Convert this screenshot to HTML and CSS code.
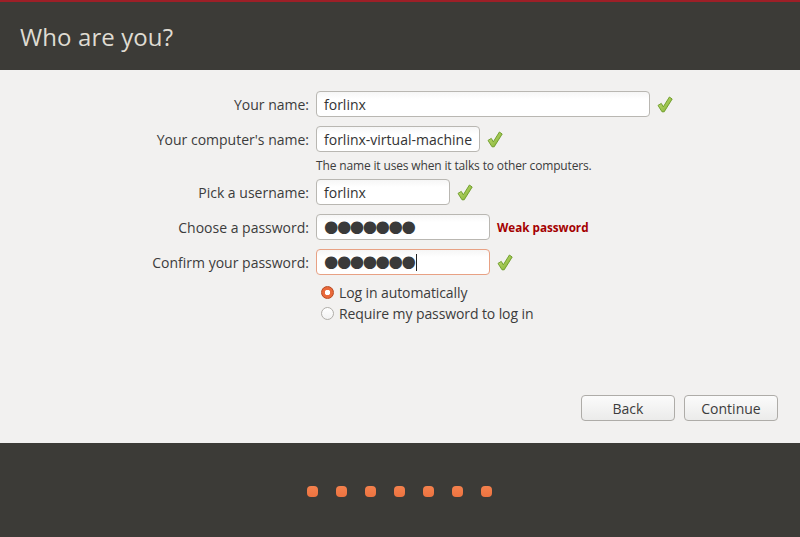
FILE: index.html
```html
<!DOCTYPE html>
<html>
<head>
<meta charset="utf-8">
<link rel="stylesheet" href="styles.css">
</head>
<body>
<div class="window">
  <header class="header">
    <h1 class="title">Who are you?</h1>
  </header>
  <main class="content">
    <div class="form">
      <label class="label">Your name:</label>
      <div class="field">
        <div class="input w1">forlinx</div>
        <svg class="check" viewBox="0 0 16 17" width="16" height="17"><defs><linearGradient id="g" x1="0" y1="0" x2="1" y2="1"><stop offset="0" stop-color="#c6e17a"/><stop offset="1" stop-color="#7fae2e"/></linearGradient></defs><path d="M1 9.4 L4.3 7.4 L6.3 10.8 L12.4 1 L15.2 3 L7.2 15.8 L5 15.8 Z" fill="url(#g)" stroke="#6a9a25" stroke-width="0.9" stroke-linejoin="round"/></svg>
      </div>

      <label class="label">Your computer's name:</label>
      <div class="field">
        <div class="input w2">forlinx-virtual-machine</div>
        <svg class="check" viewBox="0 0 16 17" width="16" height="17"><path d="M1 9.4 L4.3 7.4 L6.3 10.8 L12.4 1 L15.2 3 L7.2 15.8 L5 15.8 Z" fill="url(#g)" stroke="#6a9a25" stroke-width="0.9" stroke-linejoin="round"/></svg>
      </div>
      <div></div>
      <div class="hint">The name it uses when it talks to other computers.</div>

      <label class="label">Pick a username:</label>
      <div class="field">
        <div class="input w3">forlinx</div>
        <svg class="check" viewBox="0 0 16 17" width="16" height="17"><path d="M1 9.4 L4.3 7.4 L6.3 10.8 L12.4 1 L15.2 3 L7.2 15.8 L5 15.8 Z" fill="url(#g)" stroke="#6a9a25" stroke-width="0.9" stroke-linejoin="round"/></svg>
      </div>

      <label class="label">Choose a password:</label>
      <div class="field">
        <div class="input w4"><span class="dots">●●●●●●●</span></div>
        <span class="weak">Weak password</span>
      </div>

      <label class="label">Confirm your password:</label>
      <div class="field">
        <div class="input w4 focus"><span class="dots">●●●●●●●</span><span class="caret"></span></div>
        <svg class="check" viewBox="0 0 16 17" width="16" height="17"><path d="M1 9.4 L4.3 7.4 L6.3 10.8 L12.4 1 L15.2 3 L7.2 15.8 L5 15.8 Z" fill="url(#g)" stroke="#6a9a25" stroke-width="0.9" stroke-linejoin="round"/></svg>
      </div>

      <div></div>
      <div class="radios">
        <div class="radio-row"><span class="radio on"></span><span>Log in automatically</span></div>
        <div class="radio-row"><span class="radio"></span><span>Require my password to log in</span></div>
      </div>
    </div>
    <div class="buttons">
      <button class="btn">Back</button>
      <button class="btn">Continue</button>
    </div>
  </main>
  <footer class="footer">
    <span class="dot"></span><span class="dot"></span><span class="dot"></span><span class="dot"></span><span class="dot"></span><span class="dot"></span><span class="dot"></span>
  </footer>
</div>
</body>
</html>
```

FILE: styles.css
```css
* { box-sizing: border-box; }
html, body { margin: 0; padding: 0; }
body {
  width: 800px;
  height: 537px;
  overflow: hidden;
  font-family: "Open Sans", "DejaVu Sans", sans-serif;
  color: #3c3c3c;
  font-size: 14px;
}
.window {
  display: flex;
  flex-direction: column;
  height: 537px;
}
.header {
  height: 70px;
  background: #3c3b37;
  border-top: 2px solid #9d1f27;
  display: flex;
  align-items: center;
  padding-left: 20px;
}
.title {
  margin: 0;
  font-weight: 400;
  font-size: 24px;
  color: #dfdbd2;
  letter-spacing: 0.1px;
  padding-top: 1px;
}
.content {
  height: 373px;
  background: #f2f1f0;
  display: flex;
  flex-direction: column;
  padding-top: 21px;
}
.form {
  display: grid;
  grid-template-columns: 309px 1fr;
  column-gap: 7px;
  row-gap: 9px;
  align-items: center;
}
.label {
  text-align: right;
  white-space: nowrap;
  font-size: 14px;
  letter-spacing: 0;
}
.field {
  display: flex;
  align-items: center;
  gap: 7px;
}
.input {
  height: 26px;
  border: 1px solid #b9b7b2;
  border-radius: 4px;
  background: linear-gradient(#f6f6f6, #ffffff 30%);
  padding: 0 7px;
  display: flex;
  align-items: center;
  white-space: nowrap;
  overflow: hidden;
  font-size: 14px;
  color: #333;
}
.w1 { width: 334px; }
.w2 { width: 164px; }
.w3 { width: 134px; }
.w4 { width: 174px; }
.focus { border-color: #e8a184; }
.dots {
  font-family: "DejaVu Sans", sans-serif;
  font-size: 16.5px;
  letter-spacing: -1.5px;
  color: #3a3a3a;
  line-height: 1;
}
.caret {
  display: inline-block;
  width: 1px;
  height: 17px;
  background: #222;
  margin-left: 2px;
}
.check { display: block; }
.weak {
  color: #a40000;
  font-weight: 700;
  font-size: 11.7px;
  letter-spacing: 0;
}
.hint {
  font-size: 12px;
  line-height: 17px;
  margin-top: -4px;
  margin-bottom: -4px;
  letter-spacing: -0.15px;
  color: #3c3c3c;
}
.radios {
  display: flex;
  flex-direction: column;
  gap: 3px;
  padding-left: 5px;
  margin-top: -1px;
}
.radio-row {
  display: flex;
  align-items: center;
  gap: 5px;
  height: 18px;
  font-size: 14px;
  letter-spacing: -0.1px;
}
.radio {
  width: 13px;
  height: 13px;
  border-radius: 50%;
  border: 1px solid #b0aea9;
  background: linear-gradient(#fff, #f2f2f2);
  display: inline-block;
}
.radio.on {
  border-color: #b9491f;
  background: radial-gradient(circle, #ffffff 0 2.5px, #e9693b 3px);
}
.buttons {
  margin-top: auto;
  display: flex;
  justify-content: flex-end;
  gap: 9px;
  padding: 0 22px 22px 0;
}
.btn {
  width: 94px;
  height: 26px;
  border: 1px solid #aeaca8;
  border-radius: 4px;
  background: linear-gradient(#fbfbfb, #ebebea);
  font-family: inherit;
  font-size: 14px;
  color: #3c3c3c;
  padding: 0;
}
.footer {
  flex: 1;
  background: #3c3b37;
  display: flex;
  justify-content: center;
  align-items: center;
  gap: 18px;
  padding-right: 2px;
  padding-top: 2px;
}
.dot {
  width: 11px;
  height: 11px;
  border-radius: 4px;
  background: linear-gradient(#f4814d, #ed7340);
}
```
